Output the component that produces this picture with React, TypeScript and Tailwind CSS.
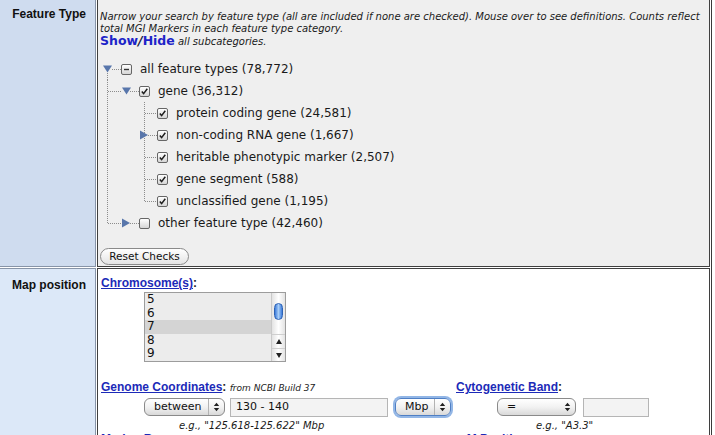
import React from "react";

type BoxState = "on" | "off" | "mixed";

function Box({ state }: { state: BoxState }) {
  return (
    <span className="flex h-[11px] w-[11px] shrink-0 items-center justify-center rounded-[2px] border border-[#666] bg-linear-to-b from-white to-[#d6d6d6]">
      {state === "on" && (
        <svg width="9" height="9" viewBox="0 0 9 9">
          <path d="M1.8 4.6 L3.6 6.6 L7.3 1.8" fill="none" stroke="#1e1e1e" strokeWidth="1.5" />
        </svg>
      )}
      {state === "mixed" && (
        <svg width="9" height="9" viewBox="0 0 9 9">
          <path d="M2 4.5 H7" stroke="#333" strokeWidth="1.4" />
        </svg>
      )}
    </span>
  );
}

const DOT = "#8c8c8c";

// connector drawing for one tree row; x is relative to the tree's left edge
function Guides({ w, lines, tri }: { w: number; lines: string[]; tri?: { dir: "down" | "right"; x: number } }) {
  return (
    <svg width={w} height="22" viewBox={`0 0 ${w} 22`} className="shrink-0">
      {lines.map((d, i) => (
        <path key={i} d={d} stroke={DOT} strokeWidth="1" strokeDasharray="1 1" fill="none" />
      ))}
      {tri && tri.dir === "down" && (
        <path d={`M${tri.x} 7.5 H${tri.x + 9} L${tri.x + 4.5} 14.5 Z`} fill="#5876ab" />
      )}
      {tri && tri.dir === "right" && (
        <path d={`M${tri.x} 6.5 V15.5 L${tri.x + 8} 11 Z`} fill="#5876ab" />
      )}
    </svg>
  );
}

function TreeRow({
  w,
  lines,
  tri,
  state,
  label,
}: {
  w: number;
  lines: string[];
  tri?: { dir: "down" | "right"; x: number };
  state: BoxState;
  label: string;
}) {
  return (
    <div className="flex h-[22px] items-center">
      <Guides w={w} lines={lines} tri={tri} />
      <Box state={state} />
      <span className="ml-[8px] whitespace-nowrap text-[12px] text-[#1a1a1a]">{label}</span>
    </div>
  );
}

function Arrows() {
  return (
    <svg width="7" height="10" viewBox="0 0 7 10">
      <path d="M0.8 4 L3.5 0.8 L6.2 4 Z M0.8 6 L3.5 9.2 L6.2 6 Z" fill="#222" />
    </svg>
  );
}

function Select({
  label,
  className,
  divider = true,
  focus = false,
}: {
  label: string;
  className: string;
  divider?: boolean;
  focus?: boolean;
}) {
  return (
    <div
      className={`flex h-[18px] items-center rounded-[6px] border bg-linear-to-b from-white via-[#f2f2f2] to-[#d9d9d9] text-[11px] text-[#111] ${
        focus ? "border-[#4f7fc4] shadow-[0_0_0_2px_#92b6e6]" : "border-[#8a8a8a]"
      } ${className}`}
    >
      <span className="flex-1 pl-[9px]">{label}</span>
      <span className={`flex h-full items-center px-[4px] ${divider ? "border-l border-[#b3b3b3]" : ""}`}>
        <Arrows />
      </span>
    </div>
  );
}

const LINK = "font-['Liberation_Sans',sans-serif] font-bold text-[#1c2ab8] underline";

export default function App() {
  return (
    <div className="h-[435px] w-[715px] overflow-hidden bg-white font-['DejaVu_Sans',sans-serif] text-[#222]">
      <div className="w-[712px] border-r border-[#3a3a3a] pr-[1px]">
        {/* Feature type */}
        <div className="flex">
          <div className="w-[96px] shrink-0 border-r border-b border-[#8794a8] bg-[#cfdcef] pt-[5px] pr-[9px] text-right font-['Liberation_Sans',sans-serif] text-[12px] font-bold text-[#111]">
            Feature Type
          </div>
          <div className="ml-[1px] h-[267px] flex-1 border-r border-b border-l border-[#3f3f3f] bg-[#efefef] pt-[11px] pl-[2px]">
            <div className="text-[10px] leading-[12px] italic text-[#1a1a1a]">
              <p>
                Narrow your search by feature type (all are included if none are checked). Mouse over to see definitions. Counts reflect
              </p>
              <p>total MGI Markers in each feature type category.</p>
              <p className="whitespace-nowrap">
                <span className="text-[12.5px] font-bold not-italic text-[#1d24c8]">Show</span>
                <span className="text-[12.5px] font-bold text-[#202040]">/</span>
                <span className="text-[12.5px] font-bold not-italic text-[#1d24c8]">Hide</span> all subcategories.
              </p>
            </div>

            <div className="mt-[10px] pl-[3px]">
              <TreeRow
                w={18}
                lines={["M4.5 15 V22", "M9 11.5 H18"]}
                tri={{ dir: "down", x: 0 }}
                state="mixed"
                label="all feature types (78,772)"
              />
              <TreeRow
                w={36}
                lines={["M4.5 0 V22", "M5 11.5 H19", "M27 11.5 H36"]}
                tri={{ dir: "down", x: 19 }}
                state="on"
                label="gene (36,312)"
              />
              <TreeRow
                w={54}
                lines={["M4.5 0 V22", "M41.5 0 V22", "M42 11.5 H54"]}
                state="on"
                label="protein coding gene (24,581)"
              />
              <TreeRow
                w={54}
                lines={["M4.5 0 V22", "M41.5 0 V22", "M45 11.5 H54"]}
                tri={{ dir: "right", x: 37 }}
                state="on"
                label="non-coding RNA gene (1,667)"
              />
              <TreeRow
                w={54}
                lines={["M4.5 0 V22", "M41.5 0 V22", "M42 11.5 H54"]}
                state="on"
                label="heritable phenotypic marker (2,507)"
              />
              <TreeRow
                w={54}
                lines={["M4.5 0 V22", "M41.5 0 V22", "M42 11.5 H54"]}
                state="on"
                label="gene segment (588)"
              />
              <TreeRow
                w={54}
                lines={["M4.5 0 V22", "M41.5 0 V11.5", "M42 11.5 H54"]}
                state="on"
                label="unclassified gene (1,195)"
              />
              <TreeRow
                w={36}
                lines={["M4.5 0 V11.5", "M5 11.5 H19", "M27 11.5 H36"]}
                tri={{ dir: "right", x: 19 }}
                state="off"
                label="other feature type (42,460)"
              />
            </div>

            <button className="mt-[14px] flex h-[17px] w-[89px] items-center justify-center rounded-full border border-[#8a8a8a] bg-linear-to-b from-white to-[#e4e4e4] text-[10.5px] text-[#111]">
              Reset Checks
            </button>
          </div>
        </div>

        {/* Map position */}
        <div className="mt-[1px] flex">
          <div className="w-[96px] shrink-0 border-t border-r border-[#8794a8] bg-[#dce8f8] pt-[7px] pr-[9px] text-right font-['Liberation_Sans',sans-serif] text-[12px] font-bold text-[#111]">
            Map position
          </div>
          <div className="ml-[1px] h-[180px] flex-1 border-t border-r border-l border-[#3f3f3f] bg-white pt-[7px] pl-[3px]">
            <div className="text-[12px] leading-[14px]">
              <a className={LINK}>Chromosome(s)</a>
              <span className="font-['Liberation_Sans',sans-serif] font-bold">:</span>
            </div>

            <div className="mt-[2px] ml-[43px] flex h-[70px] w-[142px] overflow-hidden border border-[#9c9c9c] bg-[#ececec]">
              <div className="flex-1 text-[12px] leading-[13.6px] text-[#111]">
                <div className="pl-[2px]">5</div>
                <div className="pl-[2px]">6</div>
                <div className="bg-[#d4d4d4] pl-[2px]">7</div>
                <div className="pl-[2px]">8</div>
                <div className="pl-[2px]">9</div>
              </div>
              <div className="flex w-[14px] flex-col border-l border-[#c9c9c9] bg-linear-to-r from-[#e3e3e3] via-white to-[#e3e3e3]">
                <div className="flex flex-1 justify-center pt-[10px]">
                  <div className="h-[17px] w-[9px] rounded-full border border-[#2d62b5] bg-linear-to-r from-[#3c7bd9] via-[#a7cdf7] to-[#3c7bd9]" />
                </div>
                <div className="flex h-[14px] items-center justify-center border-t border-[#cfcfcf]">
                  <svg width="6" height="5" viewBox="0 0 6 5">
                    <path d="M0 5 L3 0 L6 5 Z" fill="#222" />
                  </svg>
                </div>
                <div className="flex h-[13px] items-center justify-center border-t border-[#cfcfcf]">
                  <svg width="6" height="5" viewBox="0 0 6 5">
                    <path d="M0 0 L3 5 L6 0 Z" fill="#222" />
                  </svg>
                </div>
              </div>
            </div>

            <div className="mt-[18px] flex text-[12px] leading-[14px]">
              <div className="w-[355px] shrink-0 whitespace-nowrap">
                <a className={LINK}>Genome Coordinates</a>
                <span className="font-['Liberation_Sans',sans-serif] font-bold">: </span>
                <span className="text-[9px] italic">from NCBI Build 37</span>
              </div>
              <div>
                <a className={LINK}>Cytogenetic Band</a>
                <span className="font-['Liberation_Sans',sans-serif] font-bold">:</span>
              </div>
            </div>

            <div className="mt-[1px] flex h-[22px] items-center">
              <div className="flex w-[355px] shrink-0 items-center pl-[43px]">
                <Select label="between" className="w-[81px]" />
                <div className="ml-[5px] flex h-[19px] w-[158px] items-center border border-[#b5b5b5] bg-[#f3f3f3] pl-[5px] text-[11px] text-[#111]">
                  130 - 140
                </div>
                <Select label="Mbp" className="ml-[7px] w-[56px]" focus />
              </div>
              <Select label="=" className="ml-[41px] w-[79px]" divider={false} />
              <div className="ml-[7px] h-[19px] w-[66px] border border-[#b5b5b5] bg-[#f3f3f3]" />
            </div>

            <div className="mt-[2px] flex text-[10px] leading-[12px] italic text-[#1a1a1a]">
              <div className="w-[355px] shrink-0 pl-[78px]">e.g., "125.618-125.622" Mbp</div>
              <div className="pl-[80px]">e.g., "A3.3"</div>
            </div>

            <div className="flex text-[12px] leading-[14px]">
              <div className="w-[355px] shrink-0">
                <a className={LINK}>Marker Range</a>
              </div>
              <div className="pl-[4px]">
                <a className={LINK}>cM Position</a>
              </div>
            </div>
          </div>
        </div>
      </div>
    </div>
  );
}
